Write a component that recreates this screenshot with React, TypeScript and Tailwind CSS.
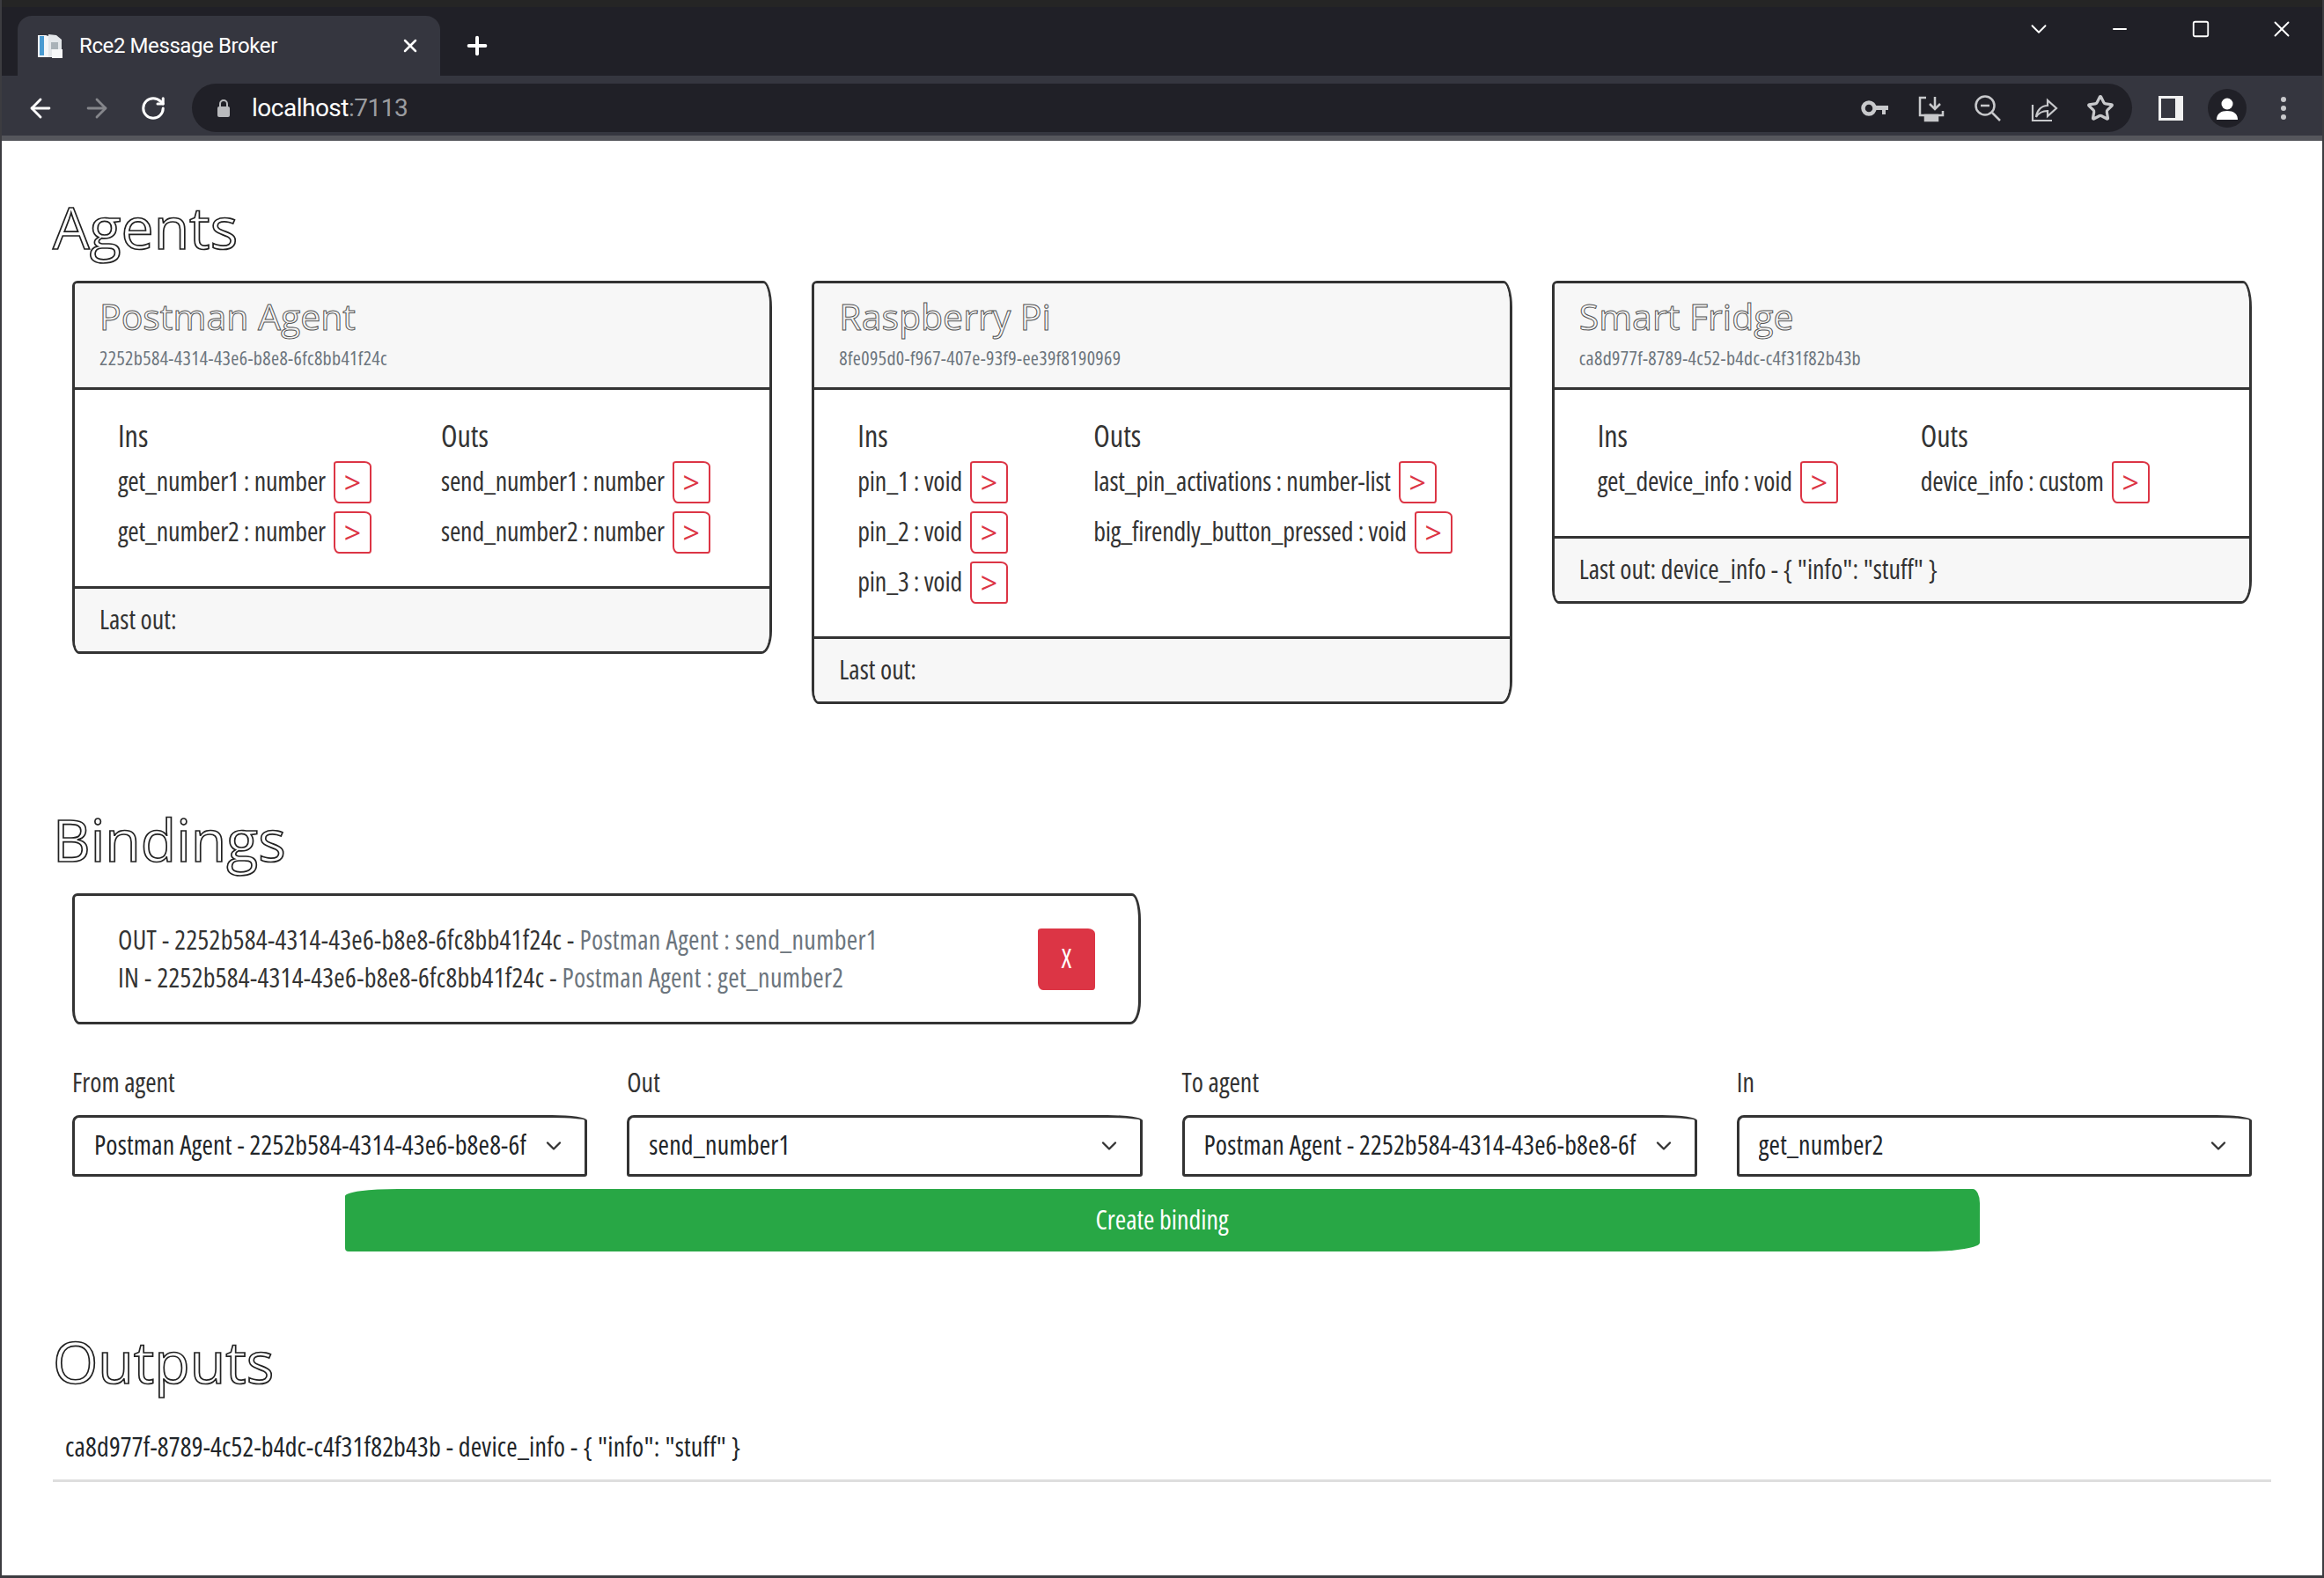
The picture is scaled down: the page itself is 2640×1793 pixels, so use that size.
import { ChevronDown, Plus, X, Minus, Square, ArrowLeft, ArrowRight, RotateCw, Star } from 'lucide-react';

const cardShape = 'rounded-[6px_10px_12px_8px/6px_30px_26px_16px]';
const smallShape = 'rounded-[4px_8px_3px_6px/3px_6px_4px_8px]';
const selectShape = 'rounded-[8px_40px_3px_3px/8px_6px_3px_3px]';
const wideShape = 'rounded-[60px_8px_60px_4px/8px_16px_10px_4px]';
const heading = "h-[80px] text-[66px] leading-[74px] mb-[19px] [font-stretch:100%] text-transparent [-webkit-text-stroke:1.7px_#222]";

type Agent = {
  name: string;
  id: string;
  ins: string[];
  outs: string[];
  insWidth: string;
  last: string;
};

const agents: Agent[] = [
  {
    name: 'Postman Agent',
    id: '2252b584-4314-43e6-b8e8-6fc8bb41f24c',
    ins: ['get_number1 : number', 'get_number2 : number'],
    outs: ['send_number1 : number', 'send_number2 : number'],
    insWidth: 'w-[367px]',
    last: 'Last out:',
  },
  {
    name: 'Raspberry Pi',
    id: '8fe095d0-f967-407e-93f9-ee39f8190969',
    ins: ['pin_1 : void', 'pin_2 : void', 'pin_3 : void'],
    outs: ['last_pin_activations : number-list', 'big_firendly_button_pressed : void'],
    insWidth: 'w-[268px]',
    last: 'Last out:',
  },
  {
    name: 'Smart Fridge',
    id: 'ca8d977f-8789-4c52-b4dc-c4f31f82b43b',
    ins: ['get_device_info : void'],
    outs: ['device_info : custom'],
    insWidth: 'w-[367px]',
    last: 'Last out: device_info - { "info": "stuff" }',
  },
];

const selects = [
  { label: 'From agent', value: 'Postman Agent - 2252b584-4314-43e6-b8e8-6fc8bb41f24c' },
  { label: 'Out', value: 'send_number1' },
  { label: 'To agent', value: 'Postman Agent - 2252b584-4314-43e6-b8e8-6fc8bb41f24c' },
  { label: 'In', value: 'get_number2' },
];

function Favicon() {
  return (
    <svg width="32" height="32" viewBox="0 0 32 32" className="shrink-0">
      <path d="M1 4h9l3 1v24H1z" fill="#f4f6f8" />
      <path d="M3 5h5v22H3z" fill="#4a9bd1" />
      <path d="M13 3l9 1 6 5v20H13z" fill="#e4e7ea" />
      <path d="M16 12h8v8h-8z" fill="#aab2b8" />
      <path d="M17 20h12v10H17z" fill="#f7f8f9" />
    </svg>
  );
}

function ToolbarIcon({ children }: { children: React.ReactNode }) {
  return <div className="w-[64px] h-[40px] flex items-center justify-center text-[#c8c9cc]">{children}</div>;
}

function BrowserChrome() {
  return (
    <div className="h-[160px] shrink-0 bg-[#202027] flex flex-col font-['Roboto'] [font-stretch:100%]">
      <div className="h-[86px] flex items-end pl-[18px] border-t-[8px] border-[#252525]">
        <div className="w-[480px] h-[68px] bg-[#35363f] rounded-t-[16px] flex items-center pl-[22px] pr-[22px] gap-[16px] text-white">
          <Favicon />
          <span className="text-[24px] flex-1 tracking-[-0.4px]">Rce2 Message Broker</span>
          <X size={24} strokeWidth={2.5} />
        </div>
        <div className="h-[68px] flex items-center ml-[26px] text-white">
          <Plus size={32} strokeWidth={3} />
        </div>
        <div className="ml-auto h-[78px] flex items-start">
          <div className="w-[92px] h-[50px] flex items-center justify-center text-white"><ChevronDown size={30} strokeWidth={1.5} /></div>
          <div className="w-[92px] h-[50px] flex items-center justify-center text-white"><Minus size={24} strokeWidth={2} /></div>
          <div className="w-[92px] h-[50px] flex items-center justify-center text-white"><Square size={22} strokeWidth={2} /></div>
          <div className="w-[92px] h-[50px] flex items-center justify-center text-white"><X size={30} strokeWidth={1.5} /></div>
        </div>
      </div>
      <div className="h-[74px] bg-[#35363f] flex items-start pt-[9px] pl-[12px] pr-[8px] border-b-[6px] border-[#55565c]">
        <div className="h-[55px] flex items-center">
          <ToolbarIcon><ArrowLeft size={34} strokeWidth={2} className="text-white" /></ToolbarIcon>
          <ToolbarIcon><ArrowRight size={34} strokeWidth={2} className="text-[#85868b]" /></ToolbarIcon>
          <ToolbarIcon><RotateCw size={30} strokeWidth={2.4} className="text-white" /></ToolbarIcon>
        </div>
        <div className="ml-[12px] w-[2204px] shrink-0 h-[55px] bg-[#202027] rounded-full flex items-center pl-[27px] pr-[4px]">
          <svg width="18" height="24" viewBox="0 0 18 24" className="text-[#b9babd]">
            <path d="M5 10V7a4 4 0 0 1 8 0v3" fill="none" stroke="currentColor" strokeWidth="2" />
            <rect x="2" y="10" width="14" height="12" rx="2" fill="currentColor" />
          </svg>
          <span className="ml-[23px] text-[28px] text-white tracking-[-0.5px]">localhost<span className="text-[#9b9ca0]">:7113</span></span>
          <div className="ml-auto flex items-center">
            <ToolbarIcon>
              <svg width="32" height="24" viewBox="0 0 32 24">
                <circle cx="9" cy="12" r="6.5" fill="none" stroke="#c8c9cc" strokeWidth="4.5" />
                <path d="M15 9h16v5h-3v5h-4v-5h-9z" fill="#c8c9cc" />
              </svg>
            </ToolbarIcon>
            <ToolbarIcon>
              <svg width="32" height="32" viewBox="0 0 32 32" fill="none" stroke="#c8c9cc" strokeWidth="2.5">
                <path d="M10 4H3v20h26v-5" />
                <path d="M20 3v14M14 11l6 6 6-6" />
                <path d="M9 24h14v6H9z" fill="#c8c9cc" />
              </svg>
            </ToolbarIcon>
            <ToolbarIcon>
              <svg width="32" height="32" viewBox="0 0 32 32" fill="none" stroke="#c8c9cc" strokeWidth="2.5">
                <circle cx="13" cy="13" r="10.5" />
                <path d="M8 13h10M21 21l9 9" />
              </svg>
            </ToolbarIcon>
            <ToolbarIcon>
              <svg width="32" height="32" viewBox="0 0 32 32" fill="none" stroke="#c8c9cc" strokeWidth="2.2">
                <path d="M3 12v18h22" />
                <path d="M7 26c1-8 6-13 13-13V7l10 9-10 9v-6c-6 0-10 2-13 7z" />
              </svg>
            </ToolbarIcon>
            <ToolbarIcon><Star size={32} strokeWidth={2.4} /></ToolbarIcon>
          </div>
        </div>
        <div className="ml-[12px] h-[55px] flex items-center">
          <ToolbarIcon>
            <div className="w-[28px] h-[28px] bg-[#f1f1f1] flex items-center pl-[3px]"><div className="w-[16px] h-[22px] bg-[#35363f]" /></div>
          </ToolbarIcon>
          <ToolbarIcon>
            <div className="w-[44px] h-[44px] rounded-full bg-[#202027] flex items-center justify-center">
              <svg width="26" height="26" viewBox="0 0 26 26" fill="#fff">
                <circle cx="13" cy="8" r="6.5" />
                <path d="M1 26c0-7 5-10 12-10s12 3 12 10z" />
              </svg>
            </div>
          </ToolbarIcon>
          <ToolbarIcon>
            <div className="flex flex-col gap-[4px]">
              <div className="w-[6px] h-[6px] rounded-full bg-[#c8c9cc]" />
              <div className="w-[6px] h-[6px] rounded-full bg-[#c8c9cc]" />
              <div className="w-[6px] h-[6px] rounded-full bg-[#c8c9cc]" />
            </div>
          </ToolbarIcon>
        </div>
      </div>
    </div>
  );
}

function PinRow({ label }: { label: string }) {
  return (
    <div className="h-[57px] flex items-center gap-[9px] whitespace-nowrap">
      <span className="pb-[3px] tracking-[-0.2px]">{label}</span>
      <button className={`w-[43px] h-[48px] border-2 border-[#dc3545] text-[#dc3545] text-[34px] leading-none [font-stretch:100%] flex items-center justify-center ${smallShape}`}>&gt;</button>
    </div>
  );
}

function AgentCard({ agent }: { agent: Agent }) {
  return (
    <div className={`border-[3px] border-[#333] overflow-hidden bg-white ${cardShape}`}>
      <div className="bg-[#f7f7f7] border-b-[3px] border-[#333] px-[28px] pt-[12px] pb-[21px]">
        <div className="text-[41px] leading-[50px] [font-stretch:100%] text-transparent [-webkit-text-stroke:1px_#555]">{agent.name}</div>
        <div className="mt-[9px] text-[22px] leading-[26px] tracking-[0.35px] text-[#6c757d]">{agent.id}</div>
      </div>
      <div className="pt-[27px] pb-[33px] pl-[49px] flex">
        <div className={agent.insWidth}>
          <div className="h-[49px] text-[34px] leading-[51px] [font-stretch:85%]">Ins</div>
          {agent.ins.map((p) => <PinRow key={p} label={p} />)}
        </div>
        <div>
          <div className="h-[49px] text-[34px] leading-[51px] [font-stretch:85%]">Outs</div>
          {agent.outs.map((p) => <PinRow key={p} label={p} />)}
        </div>
      </div>
      <div className="h-[74px] bg-[#f7f7f7] border-t-[3px] border-[#333] px-[28px] pb-[3px] flex items-center">{agent.last}</div>
    </div>
  );
}

export default function App() {
  return (
    <div className="h-[1793px] flex flex-col overflow-hidden bg-white border-x-2 border-b-[3px] border-[#3c3c40] font-['Open_Sans',sans-serif] [font-stretch:75%] text-[30px] text-[#333]">
      <BrowserChrome />
      <main className="px-[58px] pt-[60px]">
        <h2 className={heading}>Agents</h2>
        <div className="grid grid-cols-3 gap-[45px] items-start px-[22px]">
          {agents.map((a) => <AgentCard key={a.name} agent={a} />)}
        </div>

        <h2 className={`mt-[116px] ${heading}`}>Bindings</h2>
        <div className="px-[22px]">
          <div className={`w-[1214px] h-[149px] border-[3px] border-[#333] pl-[49px] pr-[49px] flex items-center justify-between ${cardShape}`}>
            <div className="leading-[43px] pb-[1px] tracking-[0.31px] whitespace-nowrap">
              <div>OUT - 2252b584-4314-43e6-b8e8-6fc8bb41f24c - <span className="text-[#6c757d]">Postman Agent : send_number1</span></div>
              <div>IN - 2252b584-4314-43e6-b8e8-6fc8bb41f24c - <span className="text-[#6c757d]">Postman Agent : get_number2</span></div>
            </div>
            <button className={`w-[65px] h-[70px] pb-[3px] bg-[#dc3545] text-white flex items-center justify-center ${smallShape}`}>X</button>
          </div>

          <div className="grid grid-cols-4 gap-[45px] mt-[46px]">
            {selects.map((s) => (
              <div key={s.label}>
                <label className="block h-[40px] leading-[40px] mb-[17px]">{s.label}</label>
                <div className="relative">
                  <select
                    defaultValue={s.value}
                    className={`w-full h-[70px] pl-[22px] pr-[66px] pb-[3px] tracking-[0.2px] appearance-none bg-white border-[3px] border-[#333] text-[#212529] outline-none ${selectShape}`}
                  >
                    <option value={s.value}>{s.value}</option>
                  </select>
                  <ChevronDown size={28} strokeWidth={2} className="absolute right-[24px] top-[21px] text-[#333] pointer-events-none" />
                </div>
              </div>
            ))}
          </div>

          <button className={`block w-3/4 h-[71px] pb-[2px] mx-auto mt-[14px] bg-[#28a745] text-white text-center ${wideShape}`}>Create binding</button>
        </div>

        <h2 className={`mt-[87px] ${heading}`}>Outputs</h2>
        <div className="mt-[35px] px-[14px] pb-[17px] border-b-[3px] border-[#dedede] leading-[40px] tracking-[0.2px] text-[#212529]">
          ca8d977f-8789-4c52-b4dc-c4f31f82b43b - device_info - {'{ "info": "stuff" }'}
        </div>
      </main>
    </div>
  );
}
